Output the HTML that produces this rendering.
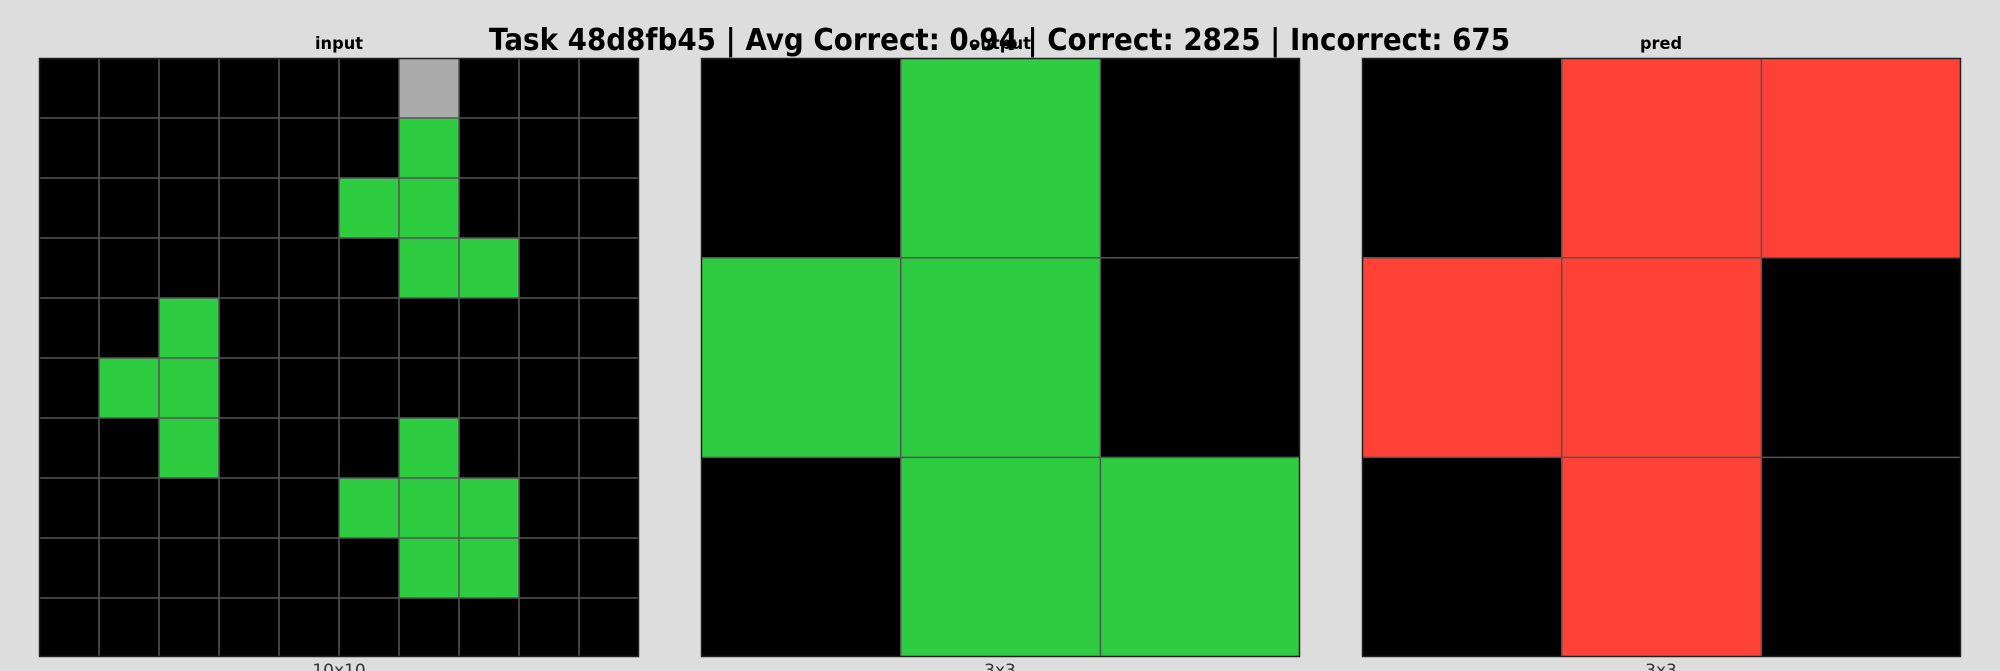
<!DOCTYPE html>
<html><head><meta charset="utf-8"><style>
html,body{margin:0;padding:0;background:#dddddd;overflow:hidden}
svg{display:block}
</style></head><body>
<svg width="2000" height="671" viewBox="0 0 2000 671" xmlns="http://www.w3.org/2000/svg" font-family="'DejaVu Sans','Liberation Sans',sans-serif">
<rect width="2000" height="671" fill="#dddddd"/>
<g id="g1">
<rect x="39" y="58" width="600" height="599" fill="#000"/>
<!-- input colored cells: cell 60 -->
<rect x="399" y="58" width="60" height="60" fill="#aaaaaa"/>
<g fill="#2ecc40">
<rect x="399" y="118" width="60" height="60"/>
<rect x="339" y="178" width="60" height="60"/><rect x="399" y="178" width="60" height="60"/>
<rect x="399" y="238" width="60" height="60"/><rect x="459" y="238" width="60" height="60"/>
<rect x="159" y="298" width="60" height="60"/>
<rect x="99" y="358" width="60" height="60"/><rect x="159" y="358" width="60" height="60"/>
<rect x="159" y="418" width="60" height="60"/><rect x="399" y="418" width="60" height="60"/>
<rect x="339" y="478" width="60" height="60"/><rect x="399" y="478" width="60" height="60"/><rect x="459" y="478" width="60" height="60"/>
<rect x="399" y="538" width="60" height="60"/><rect x="459" y="538" width="60" height="60"/>
</g>
<g stroke="#555" stroke-width="1.5">
<path d="M99 58V657M159 58V657M219 58V657M279 58V657M339 58V657M399 58V657M459 58V657M519 58V657M579 58V657"/>
<path d="M39 118H639M39 178H639M39 238H639M39 298H639M39 358H639M39 418H639M39 478H639M39 538H639M39 598H639"/>
</g>
<rect x="39.5" y="58.5" width="599" height="598" fill="none" stroke="#222" stroke-width="1.5"/>
</g>
<!-- output -->
<rect x="701" y="58" width="599" height="599" fill="#000"/>
<g fill="#2ecc40">
<rect x="900.7" y="58" width="199.7" height="199.7"/>
<rect x="701" y="257.7" width="199.7" height="199.7"/><rect x="900.7" y="257.7" width="199.7" height="199.7"/>
<rect x="900.7" y="457.4" width="199.7" height="199.6"/><rect x="1100.4" y="457.4" width="199.6" height="199.6"/>
</g>
<g stroke="#555" stroke-width="1.5"><path d="M900.7 58V657M1100.4 58V657M701 257.7H1300M701 457.4H1300"/></g>
<rect x="701.5" y="58.5" width="598" height="598" fill="none" stroke="#222" stroke-width="1.5"/>
<!-- pred -->
<rect x="1362" y="58" width="599" height="599" fill="#000"/>
<g fill="#ff4136">
<rect x="1561.7" y="58" width="199.7" height="199.7"/><rect x="1761.4" y="58" width="199.6" height="199.7"/>
<rect x="1362" y="257.7" width="199.7" height="199.7"/><rect x="1561.7" y="257.7" width="199.7" height="199.7"/>
<rect x="1561.7" y="457.4" width="199.7" height="199.6"/>
</g>
<g stroke="#555" stroke-width="1.5"><path d="M1561.7 58V657M1761.4 58V657M1362 257.7H1961M1362 457.4H1961"/></g>
<rect x="1362.5" y="58.5" width="598" height="598" fill="none" stroke="#222" stroke-width="1.5"/>
<!-- labels -->
<g font-weight="bold" font-size="17" fill="#000" text-anchor="middle">
<text x="339" y="49" textLength="48" lengthAdjust="spacingAndGlyphs">input</text>
<text x="1000" y="49" textLength="62" lengthAdjust="spacingAndGlyphs">output</text>
<text x="1661" y="49" textLength="42" lengthAdjust="spacingAndGlyphs">pred</text>
</g>
<g font-size="17" fill="#333" text-anchor="middle">
<text x="339" y="676">10x10</text>
<text x="1000" y="676">3x3</text>
<text x="1661" y="676">3x3</text>
</g>
<text x="489" y="50" font-size="30" font-weight="bold" fill="#000" textLength="1021" lengthAdjust="spacingAndGlyphs">Task 48d8fb45 | Avg Correct: 0.94 | Correct: 2825 | Incorrect: 675</text>
</svg>
</body></html>
